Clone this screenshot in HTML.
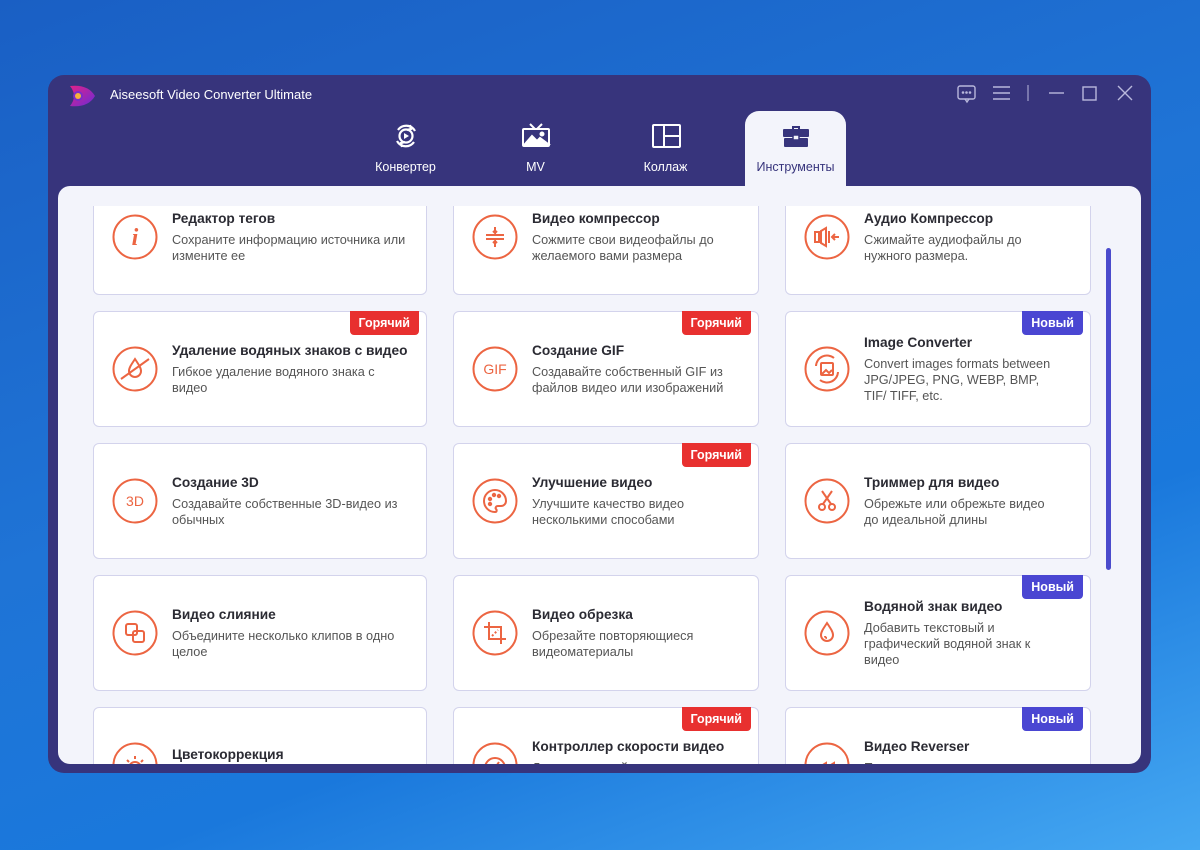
<!DOCTYPE html>
<html><head><meta charset="utf-8"><style>
*{box-sizing:border-box;margin:0;padding:0}
body{width:1200px;height:850px;overflow:hidden;font-family:"Liberation Sans","DejaVu Sans",sans-serif;background:linear-gradient(160deg,#1a5fc4 0%,#1f74d6 45%,#1a78dc 70%,#45a8f2 100%);position:relative}
.win{position:absolute;left:48px;top:75px;width:1103px;height:698px;background:#37347c;border-radius:16px}
.title{position:absolute;left:110px;top:87px;color:#fff;font-size:13px}
.logo{position:absolute;left:66px;top:82px;width:30px;height:28px}
.tab{position:absolute;top:111px;width:101px;height:75px;text-align:center;color:#fff;font-size:12.5px}
.tab svg{position:absolute;left:36px;top:10px}
.tab span{position:absolute;left:0;right:0;top:49px}
.tab.act{background:#f3f4fb;border-radius:14px 14px 0 0;color:#37347c}
.content{position:absolute;left:58px;top:186px;width:1083px;height:578px;background:#f3f4fb;border-radius:12px;overflow:hidden}
.scroll{position:absolute;left:0;top:20px;width:1083px;height:558px;overflow:hidden}
.card{position:absolute;background:#fff;border:1px solid #d3d3ec;border-radius:6px;height:116px}
.ic{position:absolute;left:18px;top:50%;margin-top:-23px;width:46px;height:46px}
.tx{position:absolute;left:78px;right:28px;top:0;bottom:0;display:flex;flex-direction:column;justify-content:center}
.c0 .tx{right:20px}
.tx b{font-size:13.7px;color:#2b2b33;margin-bottom:6px;white-space:nowrap}
.tx p{font-size:12.7px;color:#555;line-height:16px}
.bd{position:absolute;right:7px;top:-1px;height:24px;padding:0 9px;color:#fff;font-weight:bold;font-size:12.5px;line-height:24px;border-radius:0 0 4px 4px}
.hot{background:#e8302f}.new{background:#4a46d2}
.sb{position:absolute;left:1106px;top:248px;width:5px;height:322px;background:#4b4bcc;border-radius:3px}
</style></head><body>
<div class="win"></div>
<svg class="logo" viewBox="0 0 30 28"><defs><linearGradient id="lg" x1="0" y1="0" x2="1" y2="1"><stop offset="0" stop-color="#e0218a"/><stop offset="1" stop-color="#6b2bd6"/></linearGradient></defs><path d="M4 4 Q22 2 29 14 Q22 26 4 24 Q12 14 4 4Z" fill="url(#lg)"/><circle cx="12" cy="14" r="5" fill="#7a2fc8"/><circle cx="12" cy="14" r="3" fill="#f7b23b"/></svg>
<div class="title">Aiseesoft Video Converter Ultimate</div>
<svg style="position:absolute;left:957px;top:84px" width="220" height="20" viewBox="0 0 220 20" fill="none" stroke="#b9b8dc" stroke-width="1.4"><rect x="1" y="2" width="17" height="13" rx="2"/><path d="M8 15 l2 3 2-3" /><circle cx="6" cy="8.5" r=".6" fill="#b9b8dc"/><circle cx="9.5" cy="8.5" r=".6" fill="#b9b8dc"/><circle cx="13" cy="8.5" r=".6" fill="#b9b8dc"/><path d="M36 3h17M36 9h17M36 15h17"/><path d="M71 1v16" stroke-width="1"/><path d="M92 9h15"/><rect x="126" y="3" width="13" height="13"/><path d="M161 2l14 14M175 2l-14 14"/></svg>
<div class="tab" style="left:355px"><svg width="30" height="30" viewBox="0 0 30 30" fill="none" stroke="#fff" stroke-width="2.2"><path d="M7 9 A10 10 0 0 1 24 10"/><path d="M23 21 A10 10 0 0 1 6 20"/><path d="M19 4l1 4-4 1M11 26l-1-4 4-1"/><circle cx="15" cy="15" r="6.5"/><path d="M13 12v6l5-3z" fill="#fff" stroke="none"/></svg><span>Конвертер</span></div>
<div class="tab" style="left:485px"><svg width="30" height="30" viewBox="0 0 30 30" fill="none" stroke="#fff" stroke-width="2"><path d="M9 3l5 5M21 3l-5 5"/><rect x="2" y="8" width="26" height="17" rx="1"/><path d="M4 23l7-8 5 5 3-3 8 6z" fill="#fff"/><circle cx="21" cy="13" r="1.5" fill="#fff"/></svg><span>MV</span></div>
<div class="tab" style="left:615px"><svg width="30" height="30" viewBox="0 0 30 30" fill="none" stroke="#fff" stroke-width="2"><rect x="2" y="4" width="27" height="22" rx="1"/><path d="M13 4v22M13 15h16"/></svg><span>Коллаж</span></div>
<div class="tab act" style="left:745px"><svg width="30" height="30" viewBox="0 0 30 30"><path d="M11 5h8v3h-2V7h-4v1h-2z" fill="#37347c"/><rect x="2" y="8" width="26" height="8" rx="1" fill="#37347c"/><rect x="3" y="17" width="24" height="9" rx="1" fill="#37347c"/><rect x="12" y="14" width="6" height="5" rx="1" fill="#f3f4fb" stroke="#37347c" stroke-width="1.5"/></svg><span>Инструменты</span></div>
<div class="content"><div class="scroll" id="s"></div></div>
<div class="sb"></div>
<script>
var C='#ec6542';
function ring(inner){return '<svg class="ic" viewBox="0 0 46 46" fill="none" stroke="'+C+'" stroke-width="2"><circle cx="23" cy="23" r="21.5"/>'+inner+'</svg>';}
var I={
i:'<text x="23" y="31" font-family="Liberation Serif,serif" font-style="italic" font-weight="bold" font-size="24" fill="'+C+'" stroke="none" text-anchor="middle">i</text>',
comp:'<path d="M14 21h18M14 25h18M23 13v6l-2-2M23 19l2-2M23 33v-6l-2 2M23 27l2 2"/>',
aud:'<rect x="11" y="18" width="4" height="10"/><path d="M17 17l5-3v18l-5-3z"/><path d="M25 17v12M35 23h-7M31 20l-3 3 3 3"/>',
wm:'<path d="M23 13c-4 6-6 9-6 12a6 6 0 0 0 12 0c0-3-2-6-6-12z"/><path d="M9 33L37 13"/>',
gif:'<text x="23" y="28" font-family="Liberation Sans,sans-serif" font-size="14" fill="'+C+'" stroke="none" text-anchor="middle">GIF</text>',
img:'<rect x="17" y="17" width="12" height="12" rx="1"/><path d="M18 28l4-4 3 3 3-3"/><path d="M12 20a11 11 0 0 1 18-8M34 26a11 11 0 0 1-18 8"/>',
d3:'<text x="23" y="28" font-family="Liberation Sans,sans-serif" font-size="14" fill="'+C+'" stroke="none" text-anchor="middle">3D</text>',
pal:'<path d="M23 12a11 11 0 1 0 0 22c2 0 2-2 1-3s0-3 2-3h3a5 5 0 0 0 5-5c0-6-5-11-11-11z"/><circle cx="18" cy="21" r="1.2" fill="'+C+'"/><circle cx="22" cy="17" r="1.2" fill="'+C+'"/><circle cx="27" cy="18" r="1.2" fill="'+C+'"/><circle cx="18" cy="26" r="1.2" fill="'+C+'"/>',
trim:'<path d="M18 13l9 13M28 13l-9 13"/><circle cx="18" cy="29" r="3"/><circle cx="28" cy="29" r="3"/>',
mer:'<rect x="14" y="14" width="11" height="11" rx="2"/><rect x="21" y="21" width="11" height="11" rx="2"/>',
crop:'<path d="M17 12v17h17M12 17h17v17"/><path d="M20 26l6-6" stroke-dasharray="2 2"/>',
drop:'<path d="M23 13c-4 6-6 9-6 12a6 6 0 0 0 12 0c0-3-2-6-6-12z"/><path d="M21 26a2 2 0 0 0 2 2"/>',
sun:'<circle cx="23" cy="26" r="6"/><path d="M23 14v3M15 18l2 2M31 18l-2 2"/>',
spd:'<circle cx="23" cy="26" r="10"/><path d="M23 26l4-6"/>',
rev:'<path d="M14 26l8-5v10zM22 26l8-5v10z"/>'};
var cols=[[35,334],[395,306],[727,306]],tops=[-27,105,237,369,501];
var d=[
[0,0,'i','Редактор тегов','Сохраните информацию источника или измените ее'],
[0,1,'comp','Видео компрессор','Сожмите свои видеофайлы до желаемого вами размера'],
[0,2,'aud','Аудио Компрессор','Сжимайте аудиофайлы до нужного размера.'],
[1,0,'wm','Удаление водяных знаков с видео','Гибкое удаление водяного знака с видео','hot'],
[1,1,'gif','Создание GIF','Создавайте собственный GIF из файлов видео или изображений','hot'],
[1,2,'img','Image Converter','Convert images formats between JPG/JPEG, PNG, WEBP, BMP, TIF/ TIFF, etc.','new'],
[2,0,'d3','Создание 3D','Создавайте собственные 3D-видео из обычных'],
[2,1,'pal','Улучшение видео','Улучшите качество видео несколькими способами','hot'],
[2,2,'trim','Триммер для видео','Обрежьте или обрежьте видео до идеальной длины'],
[3,0,'mer','Видео слияние','Объедините несколько клипов в одно целое'],
[3,1,'crop','Видео обрезка','Обрезайте повторяющиеся видеоматериалы'],
[3,2,'drop','Водяной знак видео','Добавить текстовый и графический водяной знак к видео','new'],
[4,0,'sun','Цветокоррекция','Легко корректируйте цвет видео'],
[4,1,'spd','Контроллер скорости видео','Легко регулируйте скорость видео','hot'],
[4,2,'rev','Видео Reverser','Переверните видео задом наперед','new']];
var h='';
d.forEach(function(r){var c=cols[r[1]];h+='<div class="card c'+r[1]+'" style="left:'+c[0]+'px;top:'+tops[r[0]]+'px;width:'+c[1]+'px">'+ring(I[r[2]])+'<div class="tx"><b>'+r[3]+'</b><p>'+r[4]+'</p></div>'+(r[5]?'<div class="bd '+r[5]+'">'+(r[5]=='hot'?'Горячий':'Новый')+'</div>':'')+'</div>';});
document.getElementById('s').innerHTML=h;
</script>
</body></html>
